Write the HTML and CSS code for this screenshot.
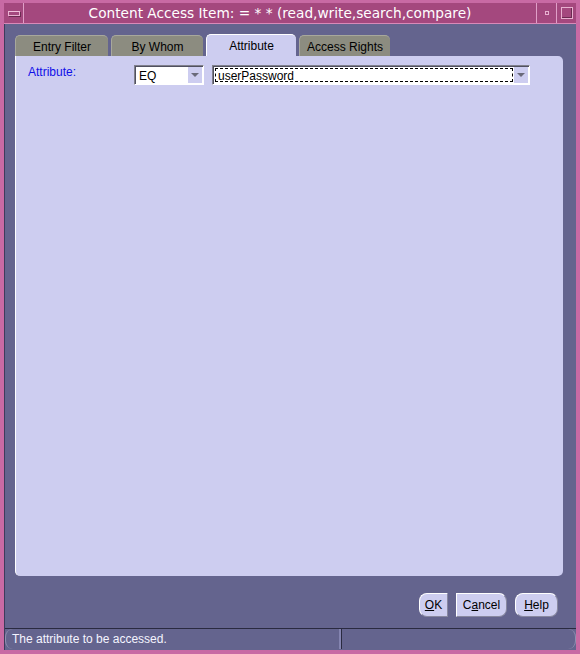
FILE: index.html
```html
<!DOCTYPE html>
<html>
<head>
<meta charset="utf-8">
<link rel="stylesheet" href="styles.css">
</head>
<body>
<div class="window">
  <div class="titlebar">
    <div class="tbtn menu"><span class="bar"></span></div>
    <div class="title">Content Access Item: = * * (read,write,search,compare)</div>
    <div class="tbtn mini"><span class="dot"></span></div>
    <div class="tbtn maxi"><span class="sq"></span></div>
  </div>
  <div class="body">
    <div class="tabs">
      <div class="tab">Entry Filter</div>
      <div class="tab">By Whom</div>
      <div class="tab active">Attribute</div>
      <div class="tab">Access Rights</div>
    </div>
    <div class="panel">
      <div class="row">
        <div class="label">Attribute:</div>
        <div class="combo small">
          <div class="field">EQ</div>
          <div class="arrow"><span class="tri"></span></div>
        </div>
        <div class="combo wide">
          <div class="field focus">userPassword</div>
          <div class="arrow"><span class="tri"></span></div>
        </div>
      </div>
    </div>
    <div class="buttons">
      <div class="btn ok"><u>O</u>K</div>
      <div class="btn cancel">C<u>a</u>ncel</div>
      <div class="btn help"><u>H</u>elp</div>
    </div>
    <div class="status">
      <div class="status-main">The attribute to be accessed.</div>
      <div class="status-side"></div>
    </div>
  </div>
</div>
</body>
</html>
```

FILE: styles.css
```css
* { box-sizing: border-box; }
html, body { margin: 0; padding: 0; }
body { width: 580px; height: 654px; overflow: hidden; background: #64648e; }

.window {
  width: 580px;
  height: 654px;
  border: 4px solid #c86aa4;
  border-top-width: 3px;
  display: flex;
  flex-direction: column;
  background: #64648e;
  font-family: "Liberation Sans", Arial, sans-serif;
}

.titlebar {
  height: 21px;
  display: flex;
  background: #a4487e;
  border-bottom: 1px solid #d88ab8;
  flex: none;
}
.tbtn {
  width: 20px;
  height: 20px;
  display: flex;
  align-items: center;
  justify-content: center;
  flex: none;
}
.menu { border-right: 1px solid #e0a0c8; }
.menu .bar {
  width: 12px; height: 5px;
  border: 1px solid #e8b0d0;
  border-top-color: #f0c0dc;
  background: #a4487e;
  box-shadow: 1px 1px 0 #6a2a50;
}
.mini { border-left: 1px solid #e0a0c8; }
.mini .dot { width: 4px; height: 4px; border: 1px solid #e8b0d0; }
.maxi { border-left: 1px solid #e0a0c8; }
.maxi .sq { width: 12px; height: 12px; border: 1px solid #e8b0d0; box-shadow: inset -1px -1px 0 #6a2a50; }
.title {
  flex: 1;
  text-align: center;
  color: #ffffff;
  font-family: "DejaVu Sans", sans-serif;
  font-size: 13.7px;
  line-height: 21px;
  white-space: nowrap;
}

.body {
  flex: 1;
  display: flex;
  flex-direction: column;
  padding: 10px 0 0 10px;
  border-left: 1px solid #3c3c5c;
}

.tabs {
  display: flex;
  gap: 3px;
  height: 22px;
  align-items: flex-end;
}
.tab {
  width: 93px;
  height: 21px;
  background: #8c8c80;
  border-radius: 5px 5px 0 0;
  border-top: 1px solid #a8a89c;
  border-left: 1px solid #a8a89c;
  font-size: 12px;
  color: #000;
  text-align: center;
  line-height: 22px;
}
.tab:nth-child(2) { width: 92px; }
.tab.active {
  width: 90px;
  height: 22px;
  background: #cdcdf0;
  border-top: 1px solid #ffffff;
  border-left: 1px solid #ffffff;
  line-height: 23px;
}
.tab:last-child { width: 91px; }

.panel {
  width: 548px;
  height: 520px;
  background: #cdcdf0;
  border-radius: 0 5px 5px 5px;
  border-left: 1px solid #ffffff;
  padding: 9px 0 0 12px;
  flex: none;
}
.row {
  display: flex;
  align-items: flex-start;
}
.label {
  width: 106px;
  color: #1010e8;
  font-size: 12px;
  line-height: 14px;
}
.combo {
  display: flex;
  height: 20px;
  border: 1px solid #80808c;
  border-right-color: #ffffff;
  border-bottom-color: #ffffff;
  background: #ffffff;
  box-shadow: inset 1px 1px 0 #505060;
}
.combo.small { width: 70px; }
.combo.wide { width: 318px; margin-left: 8px; }
.field {
  flex: 1;
  font-size: 12px;
  line-height: 16px;
  padding: 1px 0 0 3px;
  color: #000;
  margin: 1px 0 1px 1px;
}
.field.focus {
  border: 1px dashed #000;
  margin: 2px 0 2px 2px;
  line-height: 14px;
  padding: 0 0 0 2px;
}
.arrow {
  width: 15px;
  background: #cdcdf0;
  border-left: 1px solid #ffffff;
  display: flex;
  align-items: center;
  justify-content: center;
  margin: 1px 1px 1px 0;
}
.tri {
  width: 0; height: 0;
  border-left: 4px solid transparent;
  border-right: 4px solid transparent;
  border-top: 4px solid #6a6a7a;
}

.buttons {
  display: flex;
  justify-content: flex-end;
  padding: 17px 18px 0 0;
  height: 52px;
  flex: none;
}
.btn {
  height: 24px;
  background: #cdcdf0;
  font-size: 12px;
  line-height: 22px;
  color: #000;
  text-align: center;
  border-top: 1px solid #ffffff;
  border-left: 1px solid #ffffff;
  border-bottom: 1px solid #8888a0;
  border-right: 1px solid #8888a0;
}
.btn u { text-decoration: underline; }
.ok { width: 29px; border-radius: 8px 0 0 8px; margin-right: 8px; }
.cancel { width: 51px; border-radius: 0 8px 8px 0; margin-right: 8px; }
.help { width: 43px; border-radius: 8px; }

.status {
  display: flex;
  margin-left: -10px;
  height: 21px;
  border-top: 1px solid #2a2a40;
  flex: none;
}
.status-main {
  width: 336px;
  border-left: 1px solid #9090b0;
  border-radius: 8px 0 0 8px;
  border-right: 2px solid #8484b0;
  color: #f4f4ff;
  font-size: 12px;
  line-height: 20px;
  padding-left: 6px;
}
.status-side {
  flex: 1;
  border-left: 1px solid #2a2a40;
  border-radius: 0 8px 8px 0;
  border-right: 1px solid #9090b0;
}
```
